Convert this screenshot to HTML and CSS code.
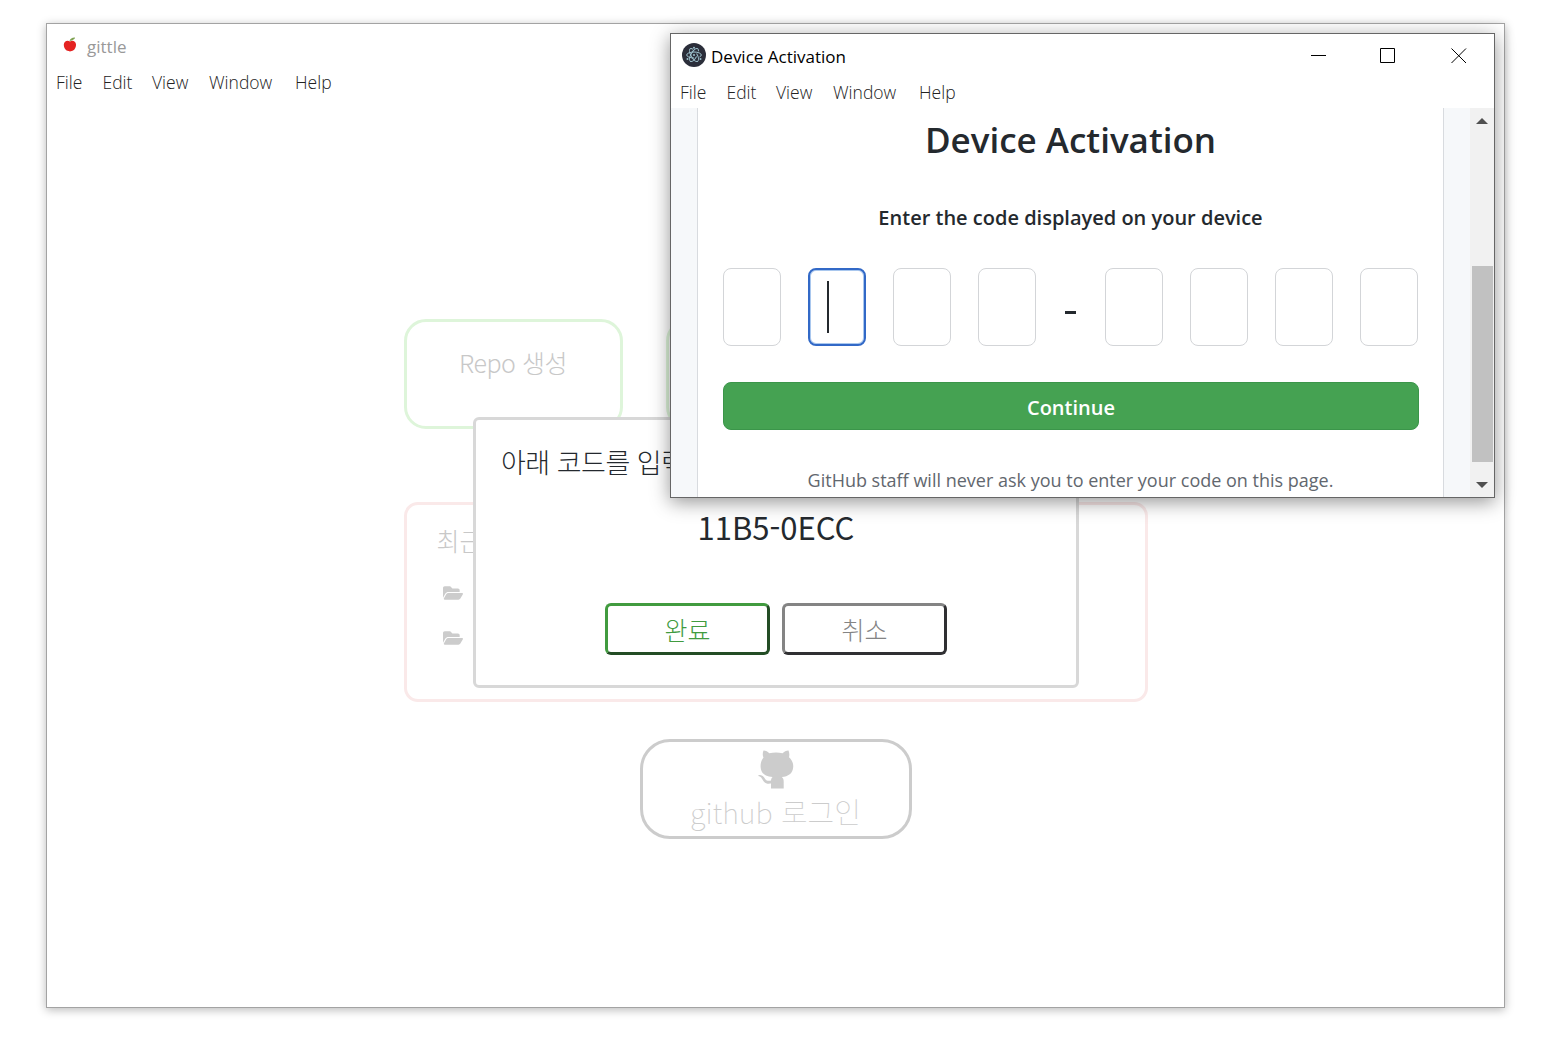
FILE: index.html
```html
<!DOCTYPE html>
<html lang="ko">
<head>
<meta charset="utf-8">
<title>gittle</title>
<link rel="stylesheet" href="styles.css">
</head>
<body>
<main class="desktop">
  <section class="window app-window">
    <header class="titlebar">
      <svg class="apple" viewBox="0 0 14 16" width="14" height="16"><path d="M7 4.5C5 2.8 1 3.6.8 7.500c0 3.500 2 6.500 4.700 6.500.8 0 1 .5 1.500.5s1-.5 1.700-.5c2.500 0 4.500-3.500 4.300-6.700C12.700 3.600 9 2.800 7 4.500z" fill="#e42322"/><path d="M6.500 4C7 2 9 .5 12 .6c0 1.600-2 2.900-5.500 3.400z" fill="#7fa252"/></svg>
      <h1 class="title muted">gittle</h1>
    </header>
    <nav class="menubar"><span class="m-file">File</span><span class="m-edit">Edit</span><span class="m-view">View</span><span class="m-window">Window</span><span class="m-help">Help</span></nav>
    <div class="home">
      <div class="cards">
        <div class="card"><span class="card-label">Repo 생성</span></div>
        <div class="card"></div>
        <div class="card"></div>
      </div>
      <div class="recent">
        <h2 class="recent-title">최근</h2>
        <svg class="folder" viewBox="0 0 576 512" width="20" height="18"><path d="M572.694 292.093L500.270 416.248A63.997 63.997 0 0 1 444.989 448H45.025c-18.523 0-30.064-20.093-20.731-36.093l72.424-124.155A64 64 0 0 1 152 256h399.964c18.523 0 30.064 20.093 20.730 36.093zM152 224h328v-48c0-26.510-21.490-48-48-48H272l-64-64H48C21.490 64 0 85.490 0 112v278.046l69.077-118.418C86.214 242.250 117.989 224 152 224z"/></svg>
        <svg class="folder" viewBox="0 0 576 512" width="20" height="18"><path d="M572.694 292.093L500.270 416.248A63.997 63.997 0 0 1 444.989 448H45.025c-18.523 0-30.064-20.093-20.731-36.093l72.424-124.155A64 64 0 0 1 152 256h399.964c18.523 0 30.064 20.093 20.730 36.093zM152 224h328v-48c0-26.510-21.490-48-48-48H272l-64-64H48C21.490 64 0 85.490 0 112v278.046l69.077-118.418C86.214 242.250 117.989 224 152 224z"/></svg>
      </div>
      <button class="login">
        <svg viewBox="0 0 36 39" width="36" height="39"><path d="M5.500.6C7.500.5 10 2 11.300 3.200c4.300-.9 9-.9 13.300 0C26 2 28.500.5 30.500.6c1 2.200 1 4.600.5 6.700C34 10.200 35.500 13 35.200 17c-.4 6.500-5 9.500-11.400 10 1.500 1.200 1.900 2.800 1.900 4.800V38.500H13v-4.900C6.500 34.500 5.600 31 4 28.700 3 27 1.500 26.300.300 26c-.3-.5.3-1 1.500-1 2.700 0 4.200 2 5.400 3.900 1.400 2 3.400 2.300 5.800 1.600.1-1.500.6-2.700 1.600-3.500C7 26.500 3 23.500 2.600 17c-.2-4 .900-7 2.900-9.500C4.500 5.300 4.500 3 5.500.6z"/></svg>
        <span class="login-label">github 로그인</span>
      </button>
    </div>
    <div class="modal">
      <p class="modal-message">아래 코드를 입력</p>
      <strong class="modal-code">11B5-0ECC</strong>
      <div class="modal-actions">
        <button class="action done">완료</button>
        <button class="action cancel">취소</button>
      </div>
    </div>
  </section>

  <section class="window device-window">
    <header class="titlebar">
      <svg class="electron" viewBox="0 0 24 24" width="24" height="24"><circle cx="12" cy="12" r="12" fill="#2b2e3a"/><g fill="none" stroke="#9fc3cf" stroke-width="1"><ellipse cx="12" cy="12" rx="3" ry="7.300" transform="rotate(90 12 12)" stroke-dasharray="28 6"/><ellipse cx="12" cy="12" rx="3" ry="7.300" transform="rotate(30 12 12)" stroke-dasharray="28 6"/><ellipse cx="12" cy="12" rx="3" ry="7.300" transform="rotate(-30 12 12)" stroke-dasharray="28 6"/></g><g fill="#9fc3cf"><circle cx="12" cy="12" r="1"/><circle cx="12" cy="4.800" r="1"/><circle cx="5.500" cy="16" r="1"/><circle cx="18.500" cy="16" r="1"/></g></svg>
      <h1 class="title">Device Activation</h1>
      <svg class="controls" viewBox="0 0 156 16" width="156" height="16" fill="none" stroke="#000"><path d="M0 7.500h15M69.500.5h14v14h-14zM140.500.5l14.500 14.500M155 .5L140.500 15"/></svg>
    </header>
    <nav class="menubar"><span class="m-file">File</span><span class="m-edit">Edit</span><span class="m-view">View</span><span class="m-window">Window</span><span class="m-help">Help</span></nav>
    <div class="browser">
      <div class="page">
        <div class="sheet">
          <h2 class="heading">Device Activation</h2>
          <p class="prompt">Enter the code displayed on your device</p>
          <div class="code-row">
            <span class="box"></span><span class="box focused"><i class="caret"></i></span><span class="box"></span><span class="box"></span>
            <i class="dash"></i>
            <span class="box"></span><span class="box"></span><span class="box"></span><span class="box"></span>
          </div>
          <button class="continue"><span>Continue</span></button>
          <p class="notice">GitHub staff will never ask you to enter your code on this page.</p>
        </div>
      </div>
      <div class="scrollbar">
        <svg viewBox="0 0 12 6" width="12" height="6"><path d="M0 6L6 0l6 6z"/></svg>
        <div class="thumb"></div>
        <svg class="down" viewBox="0 0 12 6" width="12" height="6"><path d="M0 0l6 6 6-6z"/></svg>
      </div>
    </div>
  </section>
</main>
</body>
</html>
```
FILE: styles.css
```css
* { box-sizing: border-box; }
body {
  margin: 0;
  background: #fff;
  color: #24292e;
  font-family: "Open Sans", "Noto Sans CJK KR", sans-serif;
}
h1, h2, p { margin: 0; font-weight: 400; }
button { font: inherit; padding: 0; background: #fff; }
.desktop { position: relative; width: 1562px; height: 1042px; overflow: hidden; }

.window { position: absolute; display: flex; flex-direction: column; background: #fff; }
.app-window {
  left: 46px; top: 23px; width: 1459px; height: 985px;
  border: 1px solid #a3a3a3;
  box-shadow: 0 2px 9px rgba(0, 0, 0, .28);
}
.device-window {
  left: 670px; top: 33px; width: 825px; height: 465px;
  border: 1px solid #666;
  box-shadow: 0 4px 18px rgba(0, 0, 0, .42);
}

.titlebar { display: flex; height: 42px; padding: 9px 27px 0 11px; flex: none; }
.title { font-size: 17px; line-height: 28px; margin-left: 5px; color: #000; white-space: nowrap; }
.muted { color: #999; margin-left: 10px; }
.apple { margin: 4px 0 0 5px; }
.controls { margin: 5px 0 0 auto; }
.menubar { display: flex; height: 32px; padding-left: 9px; font-size: 17.500px; line-height: 32px; font-weight: 300; color: #222; flex: none; }
.m-file { width: 46.500px; }
.m-edit { width: 49.500px; }
.m-view { width: 57px; }
.m-window { width: 86px; }

.home { display: flex; flex-direction: column; align-items: center; padding-top: 221px; }
.cards { display: flex; justify-content: space-between; width: 744px; }
.card { width: 219px; height: 110px; border: 3px solid #def5da; border-radius: 22px; text-align: center; }
.card-label { display: block; margin-top: 23px; font: 300 25px/34px "Noto Sans CJK KR", sans-serif; letter-spacing: -.5px; color: #c8c8c8; }
.recent { display: flex; flex-direction: column; width: 744px; height: 200px; margin-top: 73px; padding: 17px 30px; border: 3px solid #fae9e9; border-radius: 14px; }
.recent-title { font: 300 25px/36px "Noto Sans CJK KR", sans-serif; color: #c8c8c8; }
.folder { margin: 27px 0 0 6px; fill: #ccc; }
.recent-title + .folder { margin-top: 26px; }
.login { display: flex; flex-direction: column; align-items: center; width: 272px; height: 100px; margin-top: 37px; padding-top: 8px; border: 3px solid #ccc; border-radius: 30px; color: #ccc; fill: #ccc; }
.login-label { font: 100 29px/40px "Noto Sans CJK KR", sans-serif; margin-top: 2px; }

.modal { position: absolute; left: 426px; top: 393px; width: 606px; height: 271px; padding: 22px 25px; border: 3px solid #d8d8d8; border-radius: 6px; background: #fff; display: flex; flex-direction: column; }
.modal-message { font: 300 27px/40px "Noto Sans CJK KR", sans-serif; letter-spacing: -.5px; }
.modal-code { text-align: center; font: 400 31px/44px "Noto Sans CJK KR", sans-serif; margin-top: 23px; }
.modal-actions { display: flex; justify-content: center; gap: 12px; margin-top: 54px; }
.action { width: 165px; height: 52px; border: 3px outset; border-radius: 6px; font: 300 25px/40px "Noto Sans CJK KR", sans-serif; }
.done { color: #419b3f; border-color: #419b3f #234d25 #234d25 #419b3f; border-style: solid; }
.cancel { color: #848484; border-color: #848484 #303033 #303033 #848484; border-style: solid; }

.browser { display: flex; height: 389px; overflow: hidden; background: #f6f8fa; }
.page { width: 799px; padding: 0 26px; }
.sheet { height: 389px; padding: 0 25px; overflow: hidden; border: solid #d8dbdf; border-width: 0 1px; background: #fff; text-align: center; white-space: nowrap; }
.heading { font-size: 35px; line-height: 48px; font-weight: 600; margin-top: 8px; }
.prompt { font-size: 20px; line-height: 28px; font-weight: 600; margin-top: 40px; }
.code-row { display: flex; justify-content: space-between; height: 78px; margin-top: 36px; }
.box { width: 58px; border: 1px solid #d3d5d8; border-radius: 8px; }
.focused { border: 2px solid #3269c7; box-shadow: inset 0 0 0 1px #a9c7ee; padding: 11px 17px; }
.caret { display: block; width: 2px; height: 52px; background: #24292e; }
.dash { width: 11px; height: 3px; margin: 43px 1.500px 0; background: #24292e; }
.continue { display: block; width: 696px; height: 48px; margin-top: 36px; border: 1px solid #3b954a; border-radius: 8px; background: #45a252; color: #fff; font-size: 20px; line-height: 46px; font-weight: 600; }
.continue span { position: relative; top: 2px; }
.notice { font-size: 18px; line-height: 28px; margin-top: 36px; color: #62676e; }
.scrollbar { display: flex; flex-direction: column; align-items: center; width: 24px; padding-top: 10px; background: #f1f1f1; fill: #505050; }
.thumb { width: 21px; height: 196px; margin-top: 142px; background: #c1c1c1; }
.down { margin-top: 20px; }
```
